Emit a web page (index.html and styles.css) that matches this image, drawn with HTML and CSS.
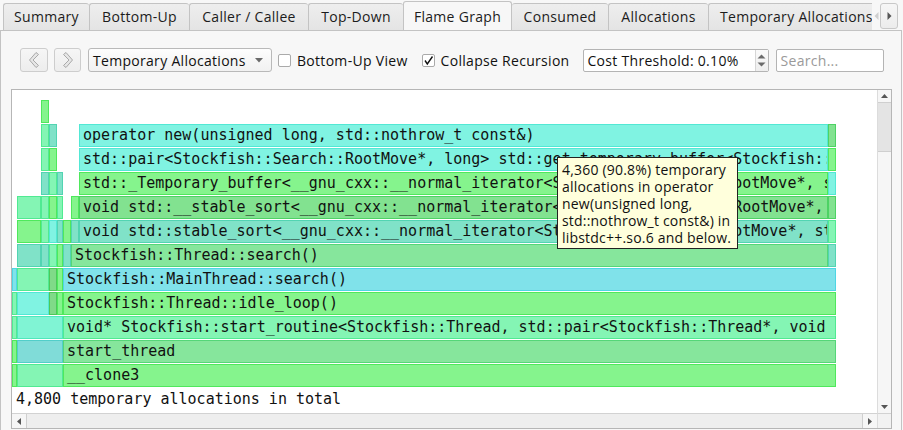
FILE: index.html
```html
<!DOCTYPE html>
<html>
<head>
<meta charset="utf-8">
<link rel="stylesheet" href="styles.css">
</head>
<body>
<div class="tabbar">
  <div class="tab t-summary">Summary</div>
  <div class="tab t-bottomup">Bottom-Up</div>
  <div class="tab t-caller">Caller / Callee</div>
  <div class="tab t-topdown">Top-Down</div>
  <div class="tab t-flame active">Flame Graph</div>
  <div class="tab t-consumed">Consumed</div>
  <div class="tab t-alloc">Allocations</div>
  <div class="tab t-temp">Temporary Allocations</div>
  <div class="tabscroll">
    <span class="tsbtn disabled"><svg width="5" height="8" viewBox="0 0 5 8"><path d="M4.5 0 L0.5 4 L4.5 8 Z" fill="#cfcfcf"/></svg></span>
    <span class="tsbtn"><svg width="5" height="8" viewBox="0 0 5 8"><path d="M0.5 0 L4.5 4 L0.5 8 Z" fill="#555"/></svg></span>
  </div>
</div>
<div class="pane">
  <div class="toolbar">
    <button class="navbtn"><svg width="10" height="16" viewBox="0 0 10 16"><path d="M7 0.5 L9.5 2.5 L4 8 L9.5 13.5 L7 15.5 L0.5 8 Z" fill="#e6e6e6" stroke="#a9a9a9" stroke-width="1" stroke-linejoin="round"/></svg></button>
    <button class="navbtn fwd"><svg width="10" height="16" viewBox="0 0 10 16"><path d="M3 0.5 L0.5 2.5 L6 8 L0.5 13.5 L3 15.5 L9.5 8 Z" fill="#e6e6e6" stroke="#a9a9a9" stroke-width="1" stroke-linejoin="round"/></svg></button>
    <div class="combo"><span>Temporary Allocations</span><svg class="combo-arrow" width="8" height="5" viewBox="0 0 8 5"><path d="M0 0 L8 0 L4 4.5 Z" fill="#6a6a6a"/></svg></div>
    <label class="check"><span class="box"></span>Bottom-Up View</label>
    <label class="check second"><span class="box"><svg width="11" height="11" viewBox="0 0 11 11"><path d="M2 5.5 L4.3 9 L9.5 1.5" fill="none" stroke="#111" stroke-width="1.4"/></svg></span>Collapse Recursion</label>
    <div class="spin"><span class="spin-text">Cost Threshold: 0.10%</span><span class="spin-btns"><svg width="9" height="5" viewBox="0 0 9 5"><path d="M0.5 4.5 L8.5 4.5 L4.5 0.5 Z" fill="#6a6a6a"/></svg><svg width="9" height="5" viewBox="0 0 9 5"><path d="M0.5 0.5 L8.5 0.5 L4.5 4.5 Z" fill="#6a6a6a"/></svg></span></div>
    <div class="search">Search...</div>
  </div>
  <div class="view">
    <div class="viewport">
      <div class="flame">
        <div class="row"><span class="sp" style="width:29px"></span><span class="fr g1" style="width:8px"></span></div>
        <div class="row"><span class="sp" style="width:29px"></span><span class="fr m1" style="width:8px"></span><span class="fr a2" style="width:8px"></span><span class="sp" style="width:22px"></span><span class="fr a1" style="width:749px">operator new(unsigned long, std::nothrow_t const&amp;)</span><span class="fr g2" style="width:8px"></span></div>
        <div class="row"><span class="sp" style="width:29px"></span><span class="fr m1" style="width:8px"></span><span class="fr g1" style="width:8px"></span><span class="sp" style="width:22px"></span><span class="fr a1" style="width:749px">std::pair&lt;Stockfish::Search::RootMove*, long&gt; std::get_temporary_buffer&lt;Stockfish::Search::RootMove&gt;(long)</span><span class="fr g1" style="width:8px"></span></div>
        <div class="row"><span class="sp" style="width:29px"></span><span class="fr a2" style="width:8px"></span><span class="fr m1" style="width:8px"></span><span class="fr a2" style="width:6px"></span><span class="sp" style="width:16px"></span><span class="fr g1" style="width:749px">std::_Temporary_buffer&lt;__gnu_cxx::__normal_iterator&lt;Stockfish::Search::RootMove*, std::vector&lt;Stockfish::Search::RootMove&gt;&gt;</span><span class="fr a1" style="width:8px"></span></div>
        <div class="row"><span class="sp" style="width:5px"></span><span class="fr m1" style="width:24px"></span><span class="fr m1" style="width:8px"></span><span class="fr g1" style="width:8px"></span><span class="fr m1" style="width:6px"></span><span class="sp" style="width:8px"></span><span class="fr g1" style="width:8px"></span><span class="fr g2" style="width:749px">void std::__stable_sort&lt;__gnu_cxx::__normal_iterator&lt;Stockfish::Search::RootMove*, std::vector&lt;Stockfish::Search::RootMove&gt;&gt;</span><span class="fr g2" style="width:8px"></span></div>
        <div class="row"><span class="sp" style="width:5px"></span><span class="fr g1" style="width:24px"></span><span class="fr m1" style="width:8px"></span><span class="fr a1" style="width:8px"></span><span class="fr a2" style="width:6px"></span><span class="fr g1" style="width:8px"></span><span class="fr a2" style="width:8px"></span><span class="fr a2" style="width:749px">void std::stable_sort&lt;__gnu_cxx::__normal_iterator&lt;Stockfish::Search::RootMove*, std::vector&lt;Stockfish::Search::RootMove&gt;&gt;</span><span class="fr m1" style="width:8px"></span></div>
        <div class="row"><span class="sp" style="width:5px"></span><span class="fr a2" style="width:24px"></span><span class="fr a2" style="width:8px"></span><span class="fr m1" style="width:8px"></span><span class="fr g1" style="width:6px"></span><span class="fr a2" style="width:8px"></span><span class="fr g3" style="width:757px">Stockfish::Thread::search()</span><span class="fr a2" style="width:8px"></span></div>
        <div class="row"><span class="fr a3" style="width:5px"></span><span class="fr m1" style="width:32px"></span><span class="fr d1" style="width:8px"></span><span class="fr g1" style="width:6px"></span><span class="fr a3" style="width:773px">Stockfish::MainThread::search()</span></div>
        <div class="row"><span class="fr m1" style="width:5px"></span><span class="fr a1" style="width:32px"></span><span class="fr d1" style="width:8px"></span><span class="fr g1" style="width:6px"></span><span class="fr g1" style="width:773px">Stockfish::Thread::idle_loop()</span></div>
        <div class="row"><span class="fr m1" style="width:5px"></span><span class="fr m2" style="width:46px"></span><span class="fr m1" style="width:773px">void* Stockfish::start_routine&lt;Stockfish::Thread, std::pair&lt;Stockfish::Thread*, void (Stockfish::Thread::*)()&gt;&gt;(void*)</span></div>
        <div class="row"><span class="fr g1" style="width:5px"></span><span class="fr t1" style="width:46px"></span><span class="fr g3" style="width:773px">start_thread</span></div>
        <div class="row"><span class="fr g1" style="width:5px"></span><span class="fr m1" style="width:46px"></span><span class="fr g1" style="width:773px">__clone3</span></div>
      </div>
      <div class="total">4,800 temporary allocations in total</div>
    </div>
    <div class="vscroll">
      <span class="arrow"><svg width="7" height="4" viewBox="0 0 7 4"><path d="M0 4 L7 4 L3.5 0 Z" fill="#555"/></svg></span>
      <span class="vthumb"></span>
      <span class="vtrack"></span>
      <span class="arrow"><svg width="7" height="4" viewBox="0 0 7 4"><path d="M0 0 L7 0 L3.5 4 Z" fill="#555"/></svg></span>
    </div>
    <div class="hscroll">
      <span class="harrow"><svg width="4" height="7" viewBox="0 0 4 7"><path d="M4 0 L4 7 L0 3.5 Z" fill="#555"/></svg></span>
      <span class="hthumb"></span>
      <span class="harrow"><svg width="4" height="7" viewBox="0 0 4 7"><path d="M0 0 L0 7 L4 3.5 Z" fill="#555"/></svg></span>
    </div>
    <div class="corner"></div>
  </div>
</div>
<div class="tooltip">4,360 (90.8%) temporary<br>allocations in operator<br>new(unsigned long,<br>std::nothrow_t const&amp;) in<br>libstdc++.so.6 and below.</div>
</body>
</html>
```
FILE: styles.css
```css
html, body {
  margin: 0;
  padding: 0;
}
body {
  width: 903px;
  height: 430px;
  overflow: hidden;
  position: relative;
  background: #f7f7f7;
  font-family: "Open Sans", "Noto Sans", sans-serif;
  font-size: 14px;
  letter-spacing: 0.3px;
  color: #1c1c1c;
}

/* ---------- tabs ---------- */
.tabbar {
  display: flex;
  align-items: flex-start;
  height: 30px;
  padding-left: 3px;
  position: relative;
  overflow: hidden;
}
.tab {
  flex: none;
  box-sizing: border-box;
  height: 27px;
  margin-top: 3px;
  line-height: 25px;
  text-align: center;
  border: 1px solid #c3c3c3;
  border-bottom: none;
  border-right: none;
  border-radius: 3px 3px 0 0;
  background: linear-gradient(#eeeeee, #e4e4e4);
  white-space: nowrap;
  overflow: hidden;
}
.t-summary { width: 86px; }
.t-bottomup { width: 100px; }
.t-caller { width: 119px; }
.t-topdown { width: 95px; }
.t-flame { width: 109px; }
.t-consumed { width: 96px; }
.t-alloc { width: 100px; }
.t-temp { width: 180px; text-align: left; padding-left: 11px; }
.tab.active {
  height: 31px;
  margin-top: 1px;
  line-height: 29px;
  background: #f7f7f7;
  border-right: 1px solid #c3c3c3;
  position: relative;
  z-index: 2;
}
.tab.active + .tab { border-left: none; }
.tabscroll {
  position: absolute;
  left: 872px;
  top: 0;
  width: 31px;
  height: 30px;
  background: #f7f7f7;
  display: flex;
  align-items: flex-start;
}
.tsbtn {
  box-sizing: border-box;
  margin-top: 3px;
  height: 26px;
  display: flex;
  align-items: center;
  justify-content: center;
}
.tsbtn.disabled { width: 8px; }
.tsbtn:not(.disabled) {
  width: 18px;
  border: 1px solid #c8c8c8;
  border-radius: 3px;
  background: linear-gradient(#f6f6f6, #ececec);
}

/* ---------- pane ---------- */
.pane {
  box-sizing: border-box;
  width: 902px;
  height: 400px;
  border: 1px solid #c3c3c3;
  border-bottom: none;
  padding: 0 9px 0 10px;
  background: #f7f7f7;
  position: relative;
  z-index: 1;
}

.toolbar {
  display: flex;
  align-items: center;
  height: 24px;
  margin: 17px 0 17px 9px;
}
.navbtn {
  box-sizing: border-box;
  width: 28px;
  height: 24px;
  padding: 0;
  border: 1px solid #cdcdcd;
  border-radius: 3px;
  background: linear-gradient(#f6f6f6, #ededed);
  display: flex;
  align-items: center;
  justify-content: center;
}
.navbtn.fwd { margin-left: 6px; width: 27px; }
.combo {
  box-sizing: border-box;
  width: 184px;
  height: 24px;
  margin-left: 7px;
  padding: 0 8px 0 4px;
  border: 1px solid #b9b9b9;
  border-radius: 3px;
  background: linear-gradient(#fdfdfd, #f1f1f1);
  display: flex;
  align-items: center;
  justify-content: space-between;
  color: #111;
}
.check {
  display: flex;
  align-items: center;
  margin-left: 6px;
  color: #111;
}
.check.second { margin-left: 14px; }
.box {
  box-sizing: border-box;
  width: 13px;
  height: 13px;
  margin-right: 6px;
  border: 1px solid #aaaaaa;
  border-radius: 2px;
  background: #fff;
  display: flex;
  align-items: center;
  justify-content: center;
}
.spin {
  box-sizing: border-box;
  width: 186px;
  height: 23px;
  margin-left: 13px;
  border: 1px solid #b4b4b4;
  border-radius: 2px;
  background: #fff;
  display: flex;
  align-items: center;
  color: #111;
}
.spin-text { flex: 1; padding-left: 4px; }
.spin-btns {
  width: 12px;
  height: 21px;
  border-left: 1px solid #d6d6d6;
  background: linear-gradient(#fafafa, #eeeeee);
  display: flex;
  flex-direction: column;
  align-items: center;
  justify-content: center;
  gap: 3px;
}
.search {
  box-sizing: border-box;
  width: 108px;
  height: 23px;
  margin-left: 7px;
  padding-left: 4px;
  border: 1px solid #b4b4b4;
  border-radius: 2px;
  background: #fff;
  line-height: 21px;
  color: #9a9a9a;
}

/* ---------- flame view ---------- */
.view {
  box-sizing: border-box;
  width: 881px;
  height: 340px;
  border: 1px solid #b6b6b6;
  background: #fff;
  display: grid;
  grid-template-columns: 865px 14px;
  grid-template-rows: 323px 15px;
  letter-spacing: 0;
}
.viewport {
  overflow: hidden;
  padding-top: 10px;
  box-sizing: border-box;
}
.flame {
  display: flex;
  flex-direction: column;
  gap: 1px;
  font-family: "DejaVu Sans Mono", monospace;
  font-size: 15px;
  color: #111;
}
.row {
  display: flex;
  height: 23px;
}
.sp { flex: none; }
.fr {
  flex: none;
  box-sizing: border-box;
  height: 23px;
  border: 1px solid;
  padding-left: 3px;
  line-height: 20px;
  white-space: pre;
  overflow: hidden;
}
.g1 { background: #85f48d; border-color: #4fe85c; }
.g2 { background: #82e290; border-color: #4dd264; }
.g3 { background: #86e69c; border-color: #55d678; }
.a1 { background: #80f3e2; border-color: #52e8d4; }
.a2 { background: #80e2c8; border-color: #52d4b2; }
.a3 { background: #80e2ea; border-color: #4ed6e4; }
.m1 { background: #84f5b4; border-color: #50ea92; }
.m2 { background: #80f4d4; border-color: #4fe8bc; }
.t1 { background: #80dcd8; border-color: #52cec9; }
.d1 { background: #80da88; border-color: #4cc95a; }

.total {
  font-family: "DejaVu Sans Mono", monospace;
  font-size: 15px;
  color: #111;
  padding: 2px 0 0 4px;
  line-height: 20px;
}

.vscroll {
  box-sizing: border-box;
  border-left: 1px solid #dcdcdc;
  background: #f6f6f6;
  display: flex;
  flex-direction: column;
}
.vscroll .arrow {
  height: 12px;
  display: flex;
  align-items: center;
  justify-content: center;
}
.vthumb {
  height: 50px;
  box-sizing: border-box;
  border: 1px solid #cfcfcf;
  border-left: none;
  border-right: none;
  background: #e4e4e4;
}
.vtrack { flex: 1; }
.hscroll {
  box-sizing: border-box;
  border-top: 1px solid #d2d2d2;
  background: #f6f6f6;
  display: flex;
}
.harrow {
  width: 14px;
  display: flex;
  align-items: center;
  justify-content: center;
}
.hthumb {
  flex: 1;
  box-sizing: border-box;
  border-left: 1px solid #cfcfcf;
  border-right: 1px solid #cfcfcf;
  background: #eeeeee;
}
.corner {
  background: #f2f2f2;
  border-left: 1px solid #dcdcdc;
  border-top: 1px solid #d2d2d2;
}

/* ---------- tooltip ---------- */
.tooltip {
  position: absolute;
  left: 557px;
  top: 157px;
  z-index: 5;
  box-sizing: border-box;
  width: 181px;
  height: 92px;
  padding: 3px 0 0 4px;
  border: 1px solid #222;
  background: #ffffdc;
  color: #111;
  font-size: 14px;
  letter-spacing: 0.2px;
  line-height: 17px;
  white-space: nowrap;
}
```
